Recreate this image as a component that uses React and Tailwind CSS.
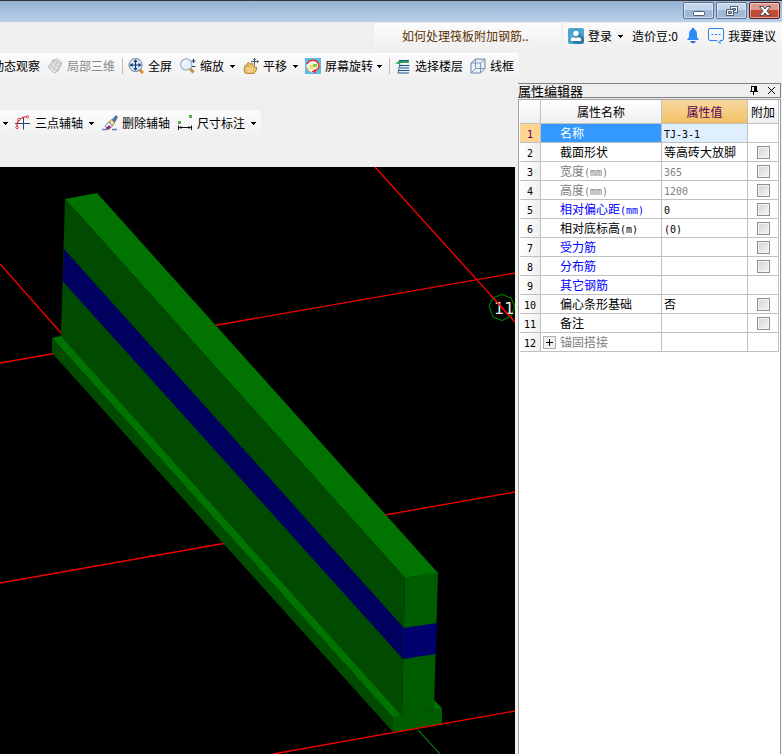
import { useState } from "react";
import clsx from "clsx";

const ROWS = [
  { name: "名称", value: "TJ-3-1", selected: true },
  { name: "截面形状", value: "等高砖大放脚", check: true },
  { name: "宽度(mm)", value: "365", check: true, tone: "muted" },
  { name: "高度(mm)", value: "1200", check: true, tone: "muted" },
  { name: "相对偏心距(mm)", value: "0", check: true, tone: "link" },
  { name: "相对底标高(m)", value: "(0)", check: true },
  { name: "受力筋", check: true, tone: "link" },
  { name: "分布筋", check: true, tone: "link" },
  { name: "其它钢筋", tone: "link" },
  { name: "偏心条形基础", value: "否", check: true },
  { name: "备注", check: true },
  { name: "锚固搭接", tone: "muted", group: true },
];

const TONES = {
  muted: "text-[#808080]",
  link: "text-[#0000ff]",
};

// Latin runs are half the width of a CJK glyph in the grid
function GridText({ text }) {
  return text.split(/([\x20-\x7e]+)/).filter(Boolean).map((part, i) =>
    /^[\x20-\x7e]/.test(part) ? (
      <span key={i} className="font-['DejaVu_Sans_Mono',monospace] text-[10px] leading-none">{part}</span>
    ) : (
      part
    )
  );
}

function Arrow({ className }) {
  return (
    <svg width="5" height="3" viewBox="0 0 5 3" className={clsx("shrink-0", className)} shapeRendering="crispEdges">
      <path d="M0 0h5v1h-1v1h-1v1h-1v-1h-1v-1h-1z" fill="#000" />
    </svg>
  );
}

function Icon({ children, size = 16 }) {
  return (
    <svg width={size} height="16" viewBox={`0 0 ${size} 16`} className="shrink-0" fill="none">
      {children}
    </svg>
  );
}

const LocalIcon = () => (
  <Icon>
    <path d="M1 9l5-7 4-1 5 4-4 8-4 2z" fill="#e6e6e6" stroke="#bcbcbc" />
    <path d="M3 6l7 7M5 3l7 7M8 2l-5 8M11 3l-5 9M14 5l-5 9M6 2l8 4" stroke="#c0c0c0" />
  </Icon>
);

const FullIcon = () => (
  <Icon>
    <path d="M11 11l4 4" stroke="#d98a2c" strokeWidth="3" />
    <circle cx="7.5" cy="7" r="6.5" fill="#dcebfa" stroke="#64789c" />
    <path d="M7.5 2v10M2.5 7h10" stroke="#173a78" strokeWidth="1.2" />
    <path d="M7.5 1.2L5.3 4h4.4zM7.5 12.8L5.3 10h4.4zM1.7 7l2.8-2.2v4.4zM13.3 7l-2.8-2.2v4.4z" fill="#173a78" />
  </Icon>
);

const ZoomIcon = () => (
  <Icon>
    <path d="M10 10.5l3.500 4" stroke="#c99137" strokeWidth="3" />
    <circle cx="6.2" cy="6.5" r="5.600" fill="#e4f0fb" stroke="#9fb0c6" strokeWidth="1.2" />
    <path d="M3 7q0-3 3-4" stroke="#fff" strokeWidth="1.5" />
    <path d="M11.500 3h4M13.500 1v4M12 8.500h3.500" stroke="#23406e" strokeWidth="1.2" />
  </Icon>
);

const PanIcon = () => (
  <Icon>
    <path d="M2 15l-1-3 .5-4L3 6.500l2 2L4.500 5 6 4.500l1.500 2L8 5l1.500.5.5 2.500 1.500-.5.500 2 1.500-.5v3L11 15.500H5z" fill="#eac068" stroke="#a87722" strokeWidth=".8" />
    <path d="M4 10.500q3 2 6-.5M4.500 13q3 1 5-.5" stroke="#fae6ac" />
    <path d="M11.500 0v7M8 3.500h7.500" stroke="#4a5568" />
    <path d="M11.500 0L9.800 2h3.400zM16 3.500L14 1.800v3.400z" fill="#4a5568" />
  </Icon>
);

const RotateIcon = () => (
  <Icon>
    <path d="M0 0h16v16H0z" fill="#58bde9" />
    <circle cx="8" cy="8" r="6.500" fill="#f3f6e4" />
    <path d="M4 7h4v4H4z" fill="#f3df68" />
    <path d="M8 6h4v3H8z" fill="#8ac84c" />
    <path d="M2 6A6.300 6.300 0 0 1 14 7.500q0 4-5 6" stroke="#e22b26" strokeWidth="1.400" />
    <path d="M6.500 13.500l4-2.500v4.500z" fill="#e22b26" />
    <path d="M1.500 9.500q1 3 3.500 4.500" stroke="#ef8d80" strokeWidth="1.200" />
  </Icon>
);

const FloorIcon = () => (
  <Icon>
    <path d="M5 6h9.500v9.500H3.500z" fill="#e9f2f8" />
    <path d="M4 2.500h10M4 7.500h10.500M5 10h9M4 12.500h10.500M3 15h11" stroke="#1e4f86" strokeWidth="1.200" />
    <path d="M0 5.500L4 3h9.500l.5 2H5v1z" fill="#2f9f50" />
    <path d="M5 5.500L3 15" stroke="#2d629b" />
  </Icon>
);

const WireIcon = () => (
  <Icon>
    <path d="M1 5l4.500-4H15v9.500L10.500 15H1z" fill="#e8eff8" stroke="#6f87a6" />
    <path d="M1 5h9.500v10M10.500 5L15 1M5.500 1v9.500H15M5.500 10.500L1 15" stroke="#8299b7" />
  </Icon>
);

const ThreePointIcon = () => (
  <Icon>
    <path d="M8.500 2v12.500M0 8.500h15" stroke="#2d3c78" />
    <path d="M2 12V9q1-6 9.500-7.500" stroke="#d42a2a" strokeWidth="1.200" />
    <circle cx="2" cy="12.500" r="1.200" fill="#fff" stroke="#d42a2a" strokeWidth=".9" />
    <circle cx="4" cy="4.500" r="1.200" fill="#fff" stroke="#d42a2a" strokeWidth=".9" />
    <circle cx="12.500" cy="1.800" r="1.200" fill="#fff" stroke="#d42a2a" strokeWidth=".9" />
  </Icon>
);

const EraseIcon = () => (
  <Icon>
    <path d="M0 14.500h5M10 14.500h5" stroke="#5f7fae" strokeWidth="1.400" />
    <path d="M9 6l5-5.500 1.500 1.500L12 8.500z" fill="#5276ad" stroke="#364b73" strokeWidth=".6" />
    <path d="M6.500 7l3-2.500L13 8l-2.500 3z" fill="#e8d8a0" stroke="#8c7a4a" strokeWidth=".7" />
    <path d="M3 11.500L6.500 7l4 4L7 14z" fill="#fff" stroke="#5a5a7a" strokeWidth=".8" />
    <path d="M4 13l3-3 2 2-2 2.500H5z" fill="#8a2a78" />
  </Icon>
);

const DimensionIcon = () => (
  <Icon>
    <path d="M1 6h3v3H1zM12 0h3v3h-3z" fill="#4cb050" />
    <path d="M1.500 10.500V15M14.500 10.500V15M2 12.500h12" stroke="#111" />
    <path d="M2 12.500l2.500-1.500v3zM14 12.500L11.500 11v3z" fill="#111" />
  </Icon>
);

const UserIcon = () => (
  <Icon>
    <rect width="16" height="16" rx="2" fill="#4aa5d3" />
    <path d="M10 4l6 6v4l-2 2H7l-4-3z" fill="#2e7ba6" />
    <circle cx="8" cy="5.500" r="2.700" fill="#fff" />
    <path d="M3 13v-2.500q2-2 5-.5 3-1.500 5 .5V13z" fill="#fff" />
  </Icon>
);

const BellIcon = () => (
  <Icon size={12}>
    <path d="M6 1q4 .5 4 5v3l2 3H0l2-3V6q0-4.500 4-5z" fill="#2b8df5" />
    <path d="M5 0h2v2H5zM3.500 13h5v1q-2.500 2.500-5 0z" fill="#2274d0" />
  </Icon>
);

const ChatIcon = () => (
  <Icon>
    <path d="M2 .5h12q1.500 0 1.500 1.500v9q0 1.500-1.500 1.500h-2v3l-3-3H2Q.5 12.500.5 11V2Q.5.5 2 .5z" stroke="#2684e8" />
    <path d="M3.500 6.500h2M7 6.500h2M10.500 6.500h2" stroke="#2684e8" />
  </Icon>
);

function Tool({ icon, label, arrow, disabled, className }) {
  return (
    <button
      type="button"
      disabled={disabled}
      className={clsx("flex shrink-0 items-center gap-1 whitespace-nowrap", disabled && "text-[#8a8a8a]", className)}
    >
      {icon}
      <span>{label}</span>
      {arrow && <Arrow className={arrow === "tight" ? "" : "ml-[2px]"} />}
    </button>
  );
}

const Separator = () => <span className="ml-[7px] h-4 w-px shrink-0 bg-[#bdbdbd]" />;

function TitleBar() {
  const base = "flex h-[17px] w-[31px] items-center justify-center rounded-[2px] border shadow-[inset_0_0_0_1px_rgba(255,255,255,0.5)]";
  return (
    <div className="flex h-[22px] shrink-0 justify-end gap-[2px] border-t border-[#33363c] bg-linear-to-b from-[#94b1d1] to-[#b9d0ea] pt-px pr-[2px]">
      <button type="button" aria-label="最小化" className={clsx(base, "border-[#5d7390] bg-linear-to-b from-[#c3d5ea] from-50% to-[#a0b9d6] to-50%")}>
        <svg width="12" height="12" viewBox="0 0 12 12">
          <rect x=".5" y="6.500" width="11" height="4" rx="1" fill="#fff" stroke="#4f5a6b" />
        </svg>
      </button>
      <button type="button" aria-label="还原" className={clsx(base, "border-[#5d7390] bg-linear-to-b from-[#c3d5ea] from-50% to-[#a0b9d6] to-50%")}>
        <svg width="12" height="12" viewBox="0 0 12 12" fill="#fff" stroke="#4f5a6b">
          <path d="M4.500 1.500h7v6h-7z" />
          <path d="M6.500 3.500h3v2h-3z" fill="#a9bfd9" />
          <path d="M.5 4.500h7v6h-7z" />
          <path d="M2.500 6.500h3v2h-3z" fill="#a9bfd9" />
        </svg>
      </button>
      <button type="button" aria-label="关闭" className={clsx(base, "border-[#5a1d1d] bg-linear-to-b from-[#dc9a8d] from-50% to-[#c04a35] to-50%")}>
        <svg width="12" height="10" viewBox="0 0 12 10">
          <path d="M.5.5h3.500L6 3 8 .5h3.500L8 5l3.500 4.500H8L6 7 4 9.500H.5L4 5z" fill="#fff" stroke="#4d4a55" />
        </svg>
      </button>
    </div>
  );
}

function Scene() {
  return (
    <svg viewBox="0 167 515 587" preserveAspectRatio="xMinYMin slice" className="min-h-0 w-full flex-1 bg-black">
      <g stroke="#f00000" strokeWidth="1.400">
        <path d="M0 363L515 273M0 583L515 492M0 264L61 333M375 167L515 322" />
      </g>

      {/* wall */}
      <path d="M65 199L97 193L438 573L405 578z" fill="#007300" />
      <path d="M65 199L405 578L402 716L61 336z" fill="#004b00" />
      <path d="M405 578L438 572L434 710L402 716z" fill="#005c00" />
      <path d="M64 249L404 628L403 659L62.500 281z" fill="#00005e" />
      <path d="M404 628L437 623L436 654L403 659z" fill="#00006e" />

      {/* footing */}
      <path d="M434 700L442 708L434 710z" fill="#007300" />
      <path d="M52 338L61 336L402 716L393 718z" fill="#007300" />
      <path d="M52 338L393 717L393 732L52 353z" fill="#004b00" />
      <path d="M393 717L402 715L434 710L442 708L442 724L393 732z" fill="#005c00" />

      <path d="M273 754L515 711" stroke="#f00000" strokeWidth="1.400" />
      <path d="M418 730L440 754" stroke="#0c6c12" strokeWidth="1.200" />

      {/* axis mark */}
      <path d="M489 306L493 298L502 294.500L511 298L515 307L511 316L502 320.500L493 317z" fill="none" stroke="#007300" strokeWidth="1.300" />
      <text x="494" y="314" fill="#e8e8e8" className="font-['DejaVu_Sans',sans-serif] text-[16px]">11</text>
      <path d="M492 296.500L515 322" stroke="#f00000" strokeWidth="1.400" />
    </svg>
  );
}

function PropertyTable() {
  const [checked, setChecked] = useState({});
  const cell = "border-r border-b border-[#c0c0c0] p-0";

  return (
    <table className="w-full table-fixed border-separate border-spacing-0 text-left text-[12px] leading-[18px]">
      <colgroup>
        <col className="w-[21px]" />
        <col />
        <col className="w-[86px]" />
        <col className="w-[31px]" />
      </colgroup>
      <thead>
        <tr className="h-6 text-center">
          <td className={clsx(cell, "bg-linear-to-b from-white to-[#efefef]")} />
          <th className={clsx(cell, "bg-linear-to-b from-white to-[#efefef] font-normal")}>属性名称</th>
          <th className={clsx(cell, "bg-linear-to-b from-[#f8d99f] to-[#f2bf62] font-normal text-[#5a005a]")}>属性值</th>
          <th className={clsx(cell, "bg-linear-to-b from-white to-[#efefef] font-normal whitespace-nowrap")}>附加</th>
        </tr>
      </thead>
      <tbody>
        {ROWS.map((row, i) => (
          <tr key={row.name} className="h-[19px]">
            <td className={clsx(cell, "text-center", row.selected ? "bg-[#ffd58f] text-[#5a005a]" : "bg-linear-to-r from-white to-[#efefef]")}>
              <div className="h-[18px]"><GridText text={String(i + 1)} /></div>
            </td>
            <td className={clsx(cell, row.selected ? "bg-[#3399ff] text-white" : TONES[row.tone])}>
              <div className={clsx("flex h-[18px] items-center whitespace-nowrap", row.group ? "gap-1 pl-[2px]" : "pl-[19px]")}>
                {row.group && (
                  <button type="button" aria-label="展开" className="flex size-[13px] items-center justify-center border border-[#b0b0b0] bg-[#efefef]">
                    <svg width="7" height="7" viewBox="0 0 7 7" shapeRendering="crispEdges">
                      <path d="M0 3h7v1H0zM3 0h1v7H3z" fill="#000" />
                    </svg>
                  </button>
                )}
                <span><GridText text={row.name} /></span>
              </div>
            </td>
            <td className={clsx(cell, "whitespace-nowrap", row.selected ? "bg-[#e0efff]" : row.tone === "muted" && "text-[#808080]")}>
              <div className="h-[18px] pl-[2px]">{row.value && <GridText text={row.value} />}</div>
            </td>
            <td className={cell}>
              {row.check && (
                <input
                  type="checkbox"
                  aria-label={`附加 ${row.name}`}
                  checked={!!checked[i]}
                  onChange={(e) => setChecked({ ...checked, [i]: e.target.checked })}
                  className="mx-auto block size-[13px] appearance-none border border-[#8e8f8f] bg-linear-to-br from-[#cfd3d8] to-[#f6f6f6] shadow-[inset_0_0_0_1px_#f4f4f4] checked:bg-[#3399ff]"
                />
              )}
            </td>
          </tr>
        ))}
      </tbody>
    </table>
  );
}

export default function App() {
  const strip = "bg-linear-to-b from-[#fcfcfc] to-[#f0f0f0]";

  return (
    <div className="flex h-screen flex-col overflow-hidden bg-[#efefef] font-['Noto_Sans_CJK_SC',sans-serif] text-[12px] leading-[18px] text-black">
      <TitleBar />

      {/* Account row */}
      <div className="flex h-[31px] shrink-0 justify-end gap-[2px] pt-px">
        <div className={clsx(strip, "flex h-[26px] w-[187px] items-center rounded-tl pl-7")}>
          <a href="#tip" className="whitespace-nowrap text-[#5c3000]">如何处理筏板附加钢筋..</a>
        </div>
        <div className={clsx(strip, "flex h-[26px] items-center rounded-tl pr-[6px] pl-[5px]")}>
          <Tool icon={<UserIcon />} label="登录" arrow />
          <span className="ml-[9px] whitespace-nowrap">造价豆:0</span>
          <button type="button" aria-label="消息" className="ml-[9px]"><BellIcon /></button>
          <Tool icon={<ChatIcon />} label="我要建议" className="ml-[9px]" />
        </div>
      </div>

      {/* View toolbar */}
      <div className="flex h-[30px] shrink-0 items-start">
        <div className={clsx(strip, "flex h-[26px] items-center pr-[5px]")}>
          <Tool label="动态观察" className="-ml-2" />
          <Tool icon={<LocalIcon />} label="局部三维" disabled className="ml-[7px]" />
          <Separator />
          <Tool icon={<FullIcon />} label="全屏" className="ml-[5px]" />
          <Tool icon={<ZoomIcon />} label="缩放" arrow className="ml-[8px]" />
          <Tool icon={<PanIcon />} label="平移" arrow className="ml-[8px]" />
          <Tool icon={<RotateIcon />} label="屏幕旋转" arrow="tight" className="ml-[7px]" />
          <Separator />
          <Tool icon={<FloorIcon />} label="选择楼层" className="ml-[5px]" />
          <Tool icon={<WireIcon />} label="线框" className="ml-[7px]" />
        </div>
      </div>

      <div className="flex min-h-0 flex-1 gap-[3px]">
        <div className="flex min-w-0 flex-1 flex-col">
          {/* Axis toolbar */}
          <div className="flex h-[84px] shrink-0 items-start pt-[27px]">
            <div className={clsx(strip, "flex h-[26px] items-center rounded-r pr-[5px] pl-[3px]")}>
              <Arrow />
              <Tool icon={<ThreePointIcon />} label="三点辅轴" arrow className="ml-[7px]" />
              <Tool icon={<EraseIcon />} label="删除辅轴" className="ml-[8px]" />
              <Tool icon={<DimensionIcon />} label="尺寸标注" arrow className="ml-[7px]" />
            </div>
          </div>
          <Scene />
        </div>

        {/* Property editor */}
        <aside className="flex w-[264px] shrink-0 flex-col pr-px">
          <header className="flex h-[15px] shrink-0 items-center border-y border-r border-[#808080]">
            <h2 className="text-[13px] leading-[13px]">属性编辑器</h2>
            <button type="button" aria-label="固定" className="ml-auto">
              <svg width="8" height="9" viewBox="0 0 8 9" shapeRendering="crispEdges">
                <path d="M1 0h6v5h1v1H4v3H3V6H0V5h1zM2 1v4h2V1z" fill="#000" fillRule="evenodd" />
              </svg>
            </button>
            <button type="button" aria-label="关闭面板" className="mr-1 ml-[9px]">
              <svg width="9" height="9" viewBox="0 0 9 9">
                <path d="M1 1l7 7M8 1L1 8" stroke="#000" />
              </svg>
            </button>
          </header>
          <div className="mt-px min-h-0 flex-1 overflow-hidden border-x border-t border-[#a0a0a0] bg-white px-px">
            <PropertyTable />
          </div>
        </aside>
      </div>
    </div>
  );
}
